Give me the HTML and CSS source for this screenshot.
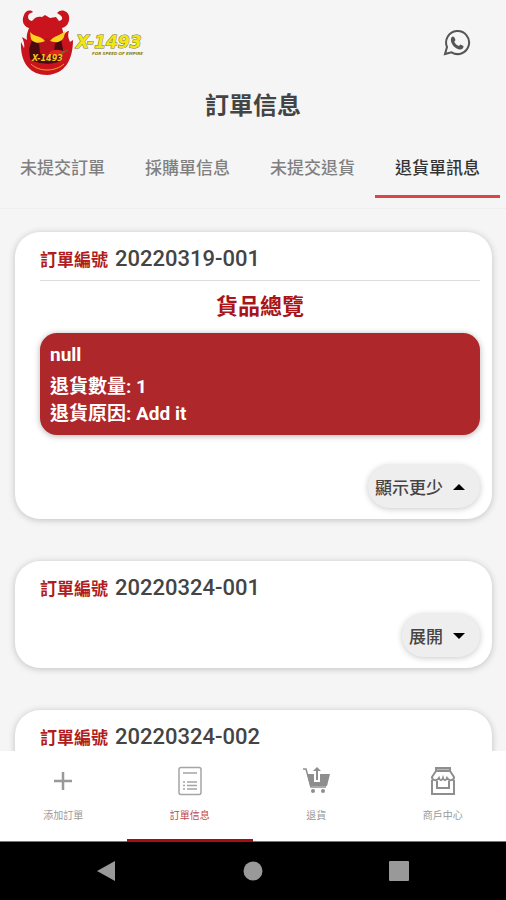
FILE: index.html
```html
<!DOCTYPE html>
<html lang="zh-Hant">
<head>
    <meta charset="UTF-8">
    <meta name="viewport" content="width=device-width, initial-scale=1.0">
    <title>訂單信息</title>
    <link rel="stylesheet" href="styles.css">
</head>
<body>
    <header class="header">
        <div class="brand">
            <svg class="logo" viewBox="0 0 136 68" role="img" aria-label="X-1493">
                <path fill="#c9141e" d="M10 19C5 18 2 12 5 6C6 2 11 0 14 3L10 5C8 8 9 11 13 12C16 8 19 7 23 8L26 6L31 9L37 8L40 12C44 11 44 8 41 6L38 4C42 -1 49 2 50 7C51 13 48 18 43 19L45 26C46 24 48 22 50 22C48 27 50 30 51 33L54 31C54 51 46 65 28 66C11 66 1 54 2 33L5 39C6 35 4 31 3 28L8 31C7 26 9 22 10 19Z"/>
                <path fill="#4a0a10" d="M13 31L23 36L28 33L33 36L42 30L44 40L43 51C36 56 19 56 11 50L10 40Z"/>
                <path fill="#b8121c" d="M20 34L28 29L36 34L35 44L28 49L21 44Z"/>
                <path fill="#ffd21c" d="M11 23C15 28 21 26 26 32C21 34 15 35 12 30ZM46 22C41 27 36 26 31 32C36 34 42 34 45 28Z"/>
                <path fill="none" stroke="#f5a81c" stroke-width="1" d="M12 55C20 63 36 63 45 55"/>
                <path fill="#e6261e" d="M30 44C35 39 42 41 46 43C43 48 36 49 30 44Z"/>
                <path fill="none" stroke="#3c8a2c" stroke-width="1" d="M43 44L49 41"/>
                <text class="logo-mini" x="13" y="52">X-1493</text>
                <text class="logo-name" x="57" y="39">X-1493</text>
                <text class="logo-tag" x="73" y="46">FOR SPEED OF EMPIRE</text>
            </svg>
        </div>
        <a class="whatsapp" href="#" aria-label="WhatsApp">
            <svg viewBox="0 0 28 28">
                <path fill="none" stroke="#555" stroke-width="2" d="M2 25L4 18A11.500 11.500 0 1 1 8.500 23.300Z"/>
                <path fill="#555" d="M9.500 7.500L11.200 8L12.500 11L11.300 12.800C12.300 15 13.800 16.300 15.800 17L17.400 15.500L20.500 17C20.800 19 19 20.700 17 20.500C12.500 20 8.300 15.700 7.900 11.500C7.700 9.800 8.500 8 9.500 7.500Z"/>
            </svg>
        </a>
    </header>

    <h1 class="title">訂單信息</h1>

    <nav class="tabs">
        <a class="tab" href="#">未提交訂單</a>
        <a class="tab" href="#">採購單信息</a>
        <a class="tab" href="#">未提交退貨</a>
        <a class="tab active" href="#">退貨單訊息</a>
    </nav>

    <main class="orders">
        <section class="card">
            <h2 class="order"><span class="order-label">訂單編號</span>20220319-001</h2>
            <hr class="line">
            <h3 class="overview">貨品總覽</h3>
            <div class="item">
                <p class="item-name">null</p>
                <p>退貨數量: 1</p>
                <p>退貨原因: Add it</p>
            </div>
            <button class="toggle" type="button">顯示更少 <svg class="arrow" viewBox="0 0 12 6"><path d="M0 6L6 0L12 6Z"/></svg></button>
        </section>

        <section class="card">
            <h2 class="order"><span class="order-label">訂單編號</span>20220324-001</h2>
            <button class="toggle" type="button">展開 <svg class="arrow" viewBox="0 0 12 6"><path d="M0 0L6 6L12 0Z"/></svg></button>
        </section>

        <section class="card">
            <h2 class="order"><span class="order-label">訂單編號</span>20220324-002</h2>
        </section>
    </main>

    <nav class="bottom-nav">
        <a class="nav-item" href="#">
            <svg class="nav-icon" viewBox="0 0 30 30"><path fill="none" stroke="#999" stroke-width="2.500" d="M15 6V24M6 15H24"/></svg>
            添加訂單
        </a>
        <a class="nav-item active" href="#">
            <svg class="nav-icon" viewBox="0 0 30 30" fill="none" stroke="#a5a5a5" stroke-width="1.500">
                <rect x="4" y="1.500" width="22" height="27" rx="2"/>
                <path d="M8 7H22M12 16H22M12 19.500H22M12 23H22M8 16H10M8 19.500H10M8 23H10"/>
            </svg>
            訂單信息
        </a>
        <a class="nav-item" href="#">
            <svg class="nav-icon" viewBox="0 0 30 30">
                <path fill="#8e8e8e" d="M6 8H13V16H19V8H29L26 20H9Z"/>
                <path fill="none" stroke="#8e8e8e" stroke-width="1.500" d="M2 3H5L10 21H25"/>
                <path fill="#8e8e8e" d="M12 5L16 1L20 5H17V14H15V5Z"/>
                <circle fill="#8e8e8e" cx="12" cy="25" r="2"/>
                <circle fill="#8e8e8e" cx="22" cy="25" r="2"/>
            </svg>
            退貨
        </a>
        <a class="nav-item" href="#">
            <svg class="nav-icon" viewBox="0 0 30 30" fill="none" stroke="#8e8e8e" stroke-width="2">
                <path fill="#bbb" d="M8 2H22V5H8Z"/>
                <path d="M8 5L4 11C4 15 9 15 11 12C12 15 14 15 15 12C16 15 18 15 19 12C21 15 26 15 26 11L22 5"/>
                <path d="M4 14V28H26V14M9 15V22H21V15"/>
            </svg>
            商戶中心
        </a>
    </nav>

    <footer class="system-bar">
        <button class="sys" type="button" aria-label="返回"><svg viewBox="0 0 20 20"><path d="M0 10L18 0V20Z"/></svg></button>
        <button class="sys" type="button" aria-label="主頁"><svg viewBox="0 0 20 20"><circle cx="10" cy="10" r="9.500"/></svg></button>
        <button class="sys" type="button" aria-label="概覽"><svg viewBox="0 0 20 20"><rect width="20" height="20" rx="1"/></svg></button>
    </footer>
</body>
</html>
```
FILE: styles.css
```css
* {
    box-sizing: border-box;
}
body {
    margin: 0;
    height: 100vh;
    display: flex;
    flex-direction: column;
    overflow: hidden;
    background-color: #f5f5f5;
    color: #444;
    font-family: Roboto, "Noto Sans CJK TC", sans-serif;
}
h1, h2, h3, p {
    margin: 0;
}
a {
    text-decoration: none;
    color: inherit;
}
svg {
    display: block;
}
.header {
    display: flex;
    justify-content: space-between;
    align-items: center;
    padding: 9px 35px 9px 19px;
}
.logo {
    width: 136px;
    height: 68px;
}
.logo text {
    font-family: "DejaVu Sans", sans-serif;
    font-weight: bold;
    font-style: italic;
}
.logo .logo-name {
    font-size: 17px;
    fill: #f2e614;
    stroke: #7d7818;
    stroke-width: 1px;
    paint-order: stroke;
}
.logo .logo-tag {
    font-size: 4px;
    fill: #8a8418;
}
.logo .logo-mini {
    font-size: 8px;
    fill: #f0c81c;
}
.whatsapp svg {
    width: 28px;
    height: 28px;
}
.title {
    font-size: 24px;
    font-weight: 700;
    line-height: 40px;
    text-align: center;
}
.tabs {
    display: flex;
    padding: 12px 6px 10px 0;
    border-bottom: 1px solid #eee;
}
.tab {
    flex: 1;
    height: 60px;
    line-height: 60px;
    font-size: 17px;
    font-weight: 500;
    text-align: center;
    color: #808080;
    border-bottom: 3px solid transparent;
}
.tab.active {
    color: #333;
    border-bottom-color: #dc4448;
}
.orders {
    flex: 1;
    min-height: 0;
    overflow: hidden;
    padding: 23px 14px 0 15px;
}
.card {
    display: flex;
    flex-direction: column;
    min-height: 107px;
    padding: 11px 12px 11px 25px;
    margin-bottom: 42px;
    background: white;
    border-radius: 25px;
    box-shadow: 0 1px 7px rgba(0, 0, 0, 0.22);
}
.order {
    display: flex;
    align-items: baseline;
    gap: 7px;
    font-size: 22px;
    font-weight: 500;
    line-height: 32px;
}
.order-label {
    font-size: 17px;
    font-weight: 700;
    line-height: 24px;
    color: #b01c20;
}
.line {
    width: 100%;
    margin: 5px 0 10px;
    border: none;
    border-top: 1px solid #ddd;
}
.overview {
    font-size: 22px;
    font-weight: 700;
    line-height: 32px;
    text-align: center;
    color: #a81418;
}
.item {
    margin: 10px 0 20px;
    padding: 8px 10px;
    border-radius: 17px;
    background: #ae272a;
    box-shadow: 0 1px 6px rgba(0, 0, 0, 0.3);
    color: white;
    font-size: 19px;
    font-weight: 700;
    line-height: 27px;
}
.item-name {
    margin-bottom: 5px;
}
.toggle {
    display: flex;
    align-items: center;
    align-self: flex-end;
    gap: 10px;
    height: 43px;
    margin-top: 10px;
    padding: 0 15px 0 7px;
    border: none;
    border-radius: 22px;
    background: #eee;
    box-shadow: 0 1px 6px rgba(0, 0, 0, 0.22);
    color: #444;
    font-family: inherit;
    font-size: 17px;
    font-weight: 500;
}
.arrow {
    width: 12px;
    height: 6px;
}
.bottom-nav {
    display: flex;
    height: 91px;
    background: white;
    z-index: 1;
}
.nav-item {
    flex: 1;
    display: flex;
    flex-direction: column;
    align-items: center;
    gap: 12px;
    padding-top: 15px;
    font-size: 10px;
    line-height: 16px;
    color: #999;
    border-bottom: 1px solid #777;
}
.nav-item.active {
    color: #c0484c;
    border-bottom: 3px solid #a80c14;
}
.nav-icon {
    width: 30px;
    height: 30px;
}
.system-bar {
    display: flex;
    justify-content: center;
    align-items: center;
    gap: 126px;
    height: 58px;
    background: black;
}
.sys {
    padding: 0;
    border: none;
    background: none;
}
.sys svg {
    width: 20px;
    height: 20px;
    fill: #999;
}
```
